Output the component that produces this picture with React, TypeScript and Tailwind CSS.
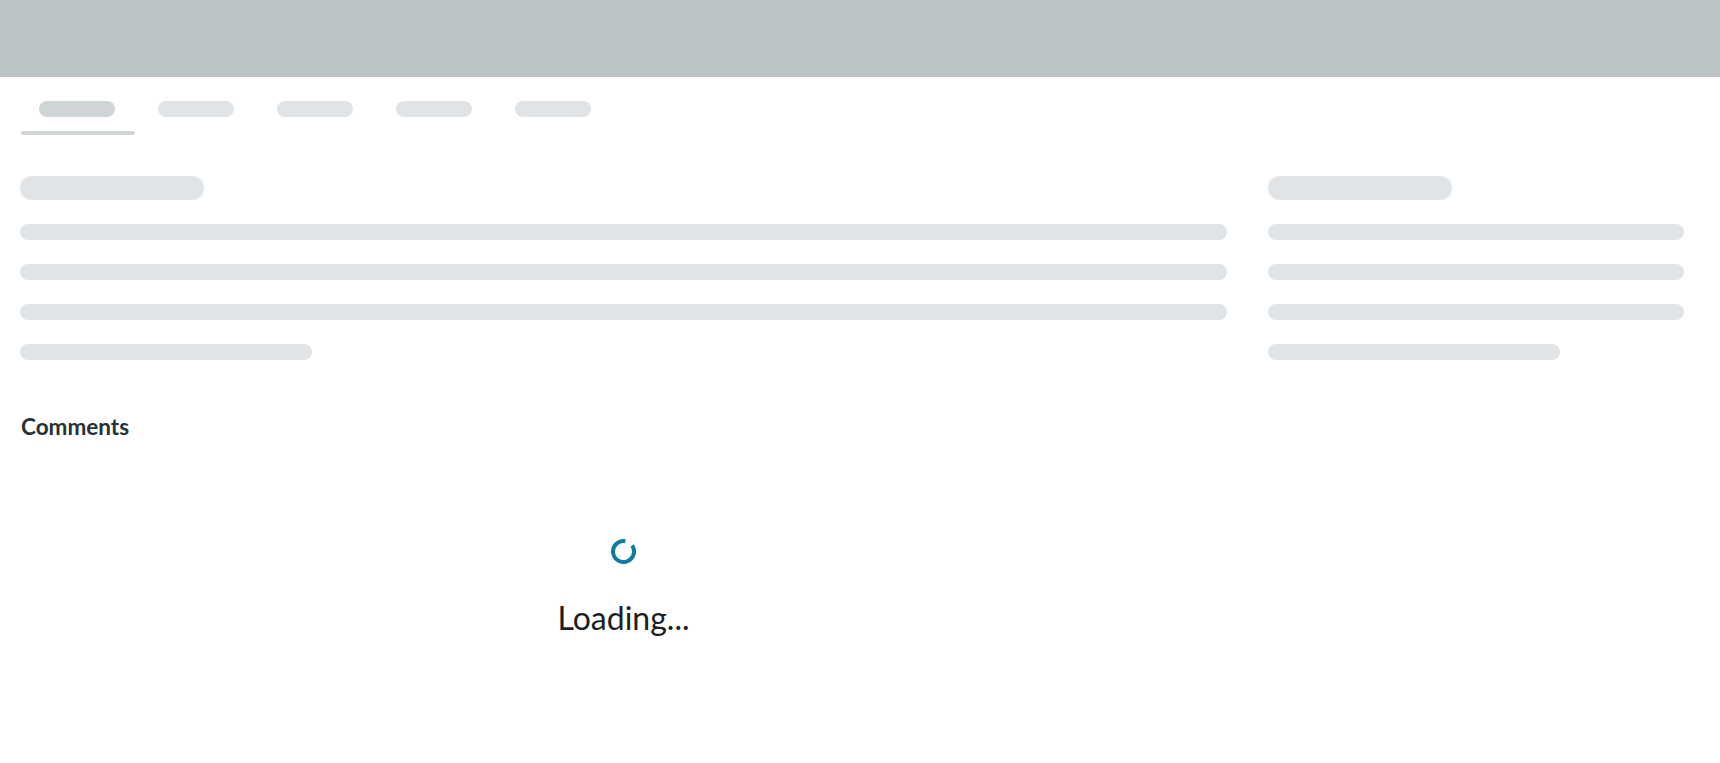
const tabs = [76, 76, 76, 76, 76];

function Bar({ className }: { className: string }) {
  return <div className={`rounded-full bg-[#e1e4e7] ${className}`} />;
}

function SkeletonBlock({ title, last }: { title: string; last: string }) {
  return (
    <div className="flex flex-col">
      <Bar className={`h-6 ${title}`} />
      <Bar className="mt-6 h-4 w-full" />
      <Bar className="mt-6 h-4 w-full" />
      <Bar className="mt-6 h-4 w-full" />
      <Bar className={`mt-6 h-4 ${last}`} />
    </div>
  );
}

function Spinner() {
  return (
    <svg width="25" height="25" viewBox="0 0 25 25" fill="none">
      <path
        d="M21.1 6.48 A10.5 10.5 0 1 1 14.32 2.16"
        stroke="#0e7d9d"
        strokeWidth="4"
      />
    </svg>
  );
}

export default function App() {
  return (
    <div className="min-h-screen bg-white font-['Lato','Noto_Sans',sans-serif]">
      <header className="h-[77px] bg-[#bcc3c6]" />

      <nav className="flex flex-col pl-[21px] pt-6">
        <div className="flex gap-[43px] pl-[18px]">
          {tabs.map((w, i) => (
            <div
              key={i}
              className={`h-4 w-[76px] rounded-full ${i === 0 ? "bg-[#cfd4d7]" : "bg-[#e1e4e7]"}`}
            />
          ))}
        </div>
        <div className="mt-[14px] h-1 w-[114px] rounded-full bg-[#cfd4d7]" />
      </nav>

      <main className="grid grid-cols-[1fr_416px] gap-[41px] pl-5 pr-9 pt-[41px]">
        <section className="flex flex-col">
          <SkeletonBlock title="w-[184px]" last="w-[292px]" />

          <h2 className="mt-[53px] pl-px text-[22.5px] font-bold leading-[1.2] text-[#263238]">
            Comments
          </h2>

          <div className="mt-[99px] flex flex-col items-center">
            <Spinner />
            <p className="mt-[35px] text-[32px] leading-[1.2] text-[#1b1f22]">Loading...</p>
          </div>
        </section>

        <aside>
          <SkeletonBlock title="w-[184px]" last="w-[292px]" />
        </aside>
      </main>
    </div>
  );
}
